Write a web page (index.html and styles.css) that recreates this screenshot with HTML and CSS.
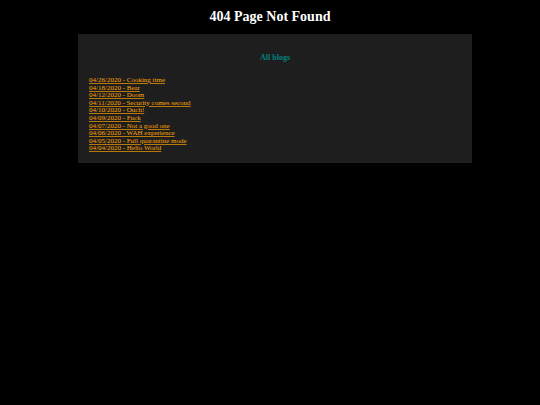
FILE: index.html
```
<!DOCTYPE html>
<html lang="en">
<head>
    <meta charset="utf-8">
    <title>404 Page Not Found</title>
    <link rel="stylesheet" href="styles.css">
</head>
<body>
    <h1>404 Page Not Found</h1>

    <div class="content">
        <h2>All blogs</h2>
        <ul class="blog-list">
            <li><a href="/blog/cooking-time">04/26/2020 - Cooking time</a></li>
            <li><a href="/blog/bear">04/18/2020 - Bear</a></li>
            <li><a href="/blog/doom">04/12/2020 - Doom</a></li>
            <li><a href="/blog/security">04/11/2020 - Security comes second</a></li>
            <li><a href="/blog/ouch">04/10/2020 - Ouch!</a></li>
            <li><a href="/blog/fuck">04/09/2020 - Fuck</a></li>
            <li><a href="/blog/not-a-good-one">04/07/2020 - Not a good one</a></li>
            <li><a href="/blog/wah">04/06/2020 - WAH experience</a></li>
            <li><a href="/blog/quarantine">04/05/2020 - Full quarantine mode</a></li>
            <li><a href="/blog/hello-world">04/04/2020 - Hello World</a></li>
        </ul>
    </div>
</body>
</html>
```

FILE: styles.css
```
body {
    margin: 0;
    background-color: #000;
    color: white;
    font-family: "Liberation Serif", "Times New Roman", serif;
    font-size: 7px;
    line-height: 8px;
}
h1 {
    margin: 9px 0;
    font-size: 14px;
    line-height: 16px;
    text-align: center;
}
.content {
    margin: 0 68px 0 78px;
    padding: 19px 11px 10px;
    background-color: #1e1e1e;
}
h2 {
    margin: 0 0 14px;
    font-size: 8px;
    line-height: 10px;
    color: teal;
    text-align: center;
}
.blog-list {
    display: grid;
    grid-auto-rows: 1fr;
    min-height: 76px;
    margin: 0;
    padding: 0;
    list-style: none;
    line-height: 7px;
}
.blog-list a {
    color: orange;
    text-decoration-color: #b87a08;
}
```
